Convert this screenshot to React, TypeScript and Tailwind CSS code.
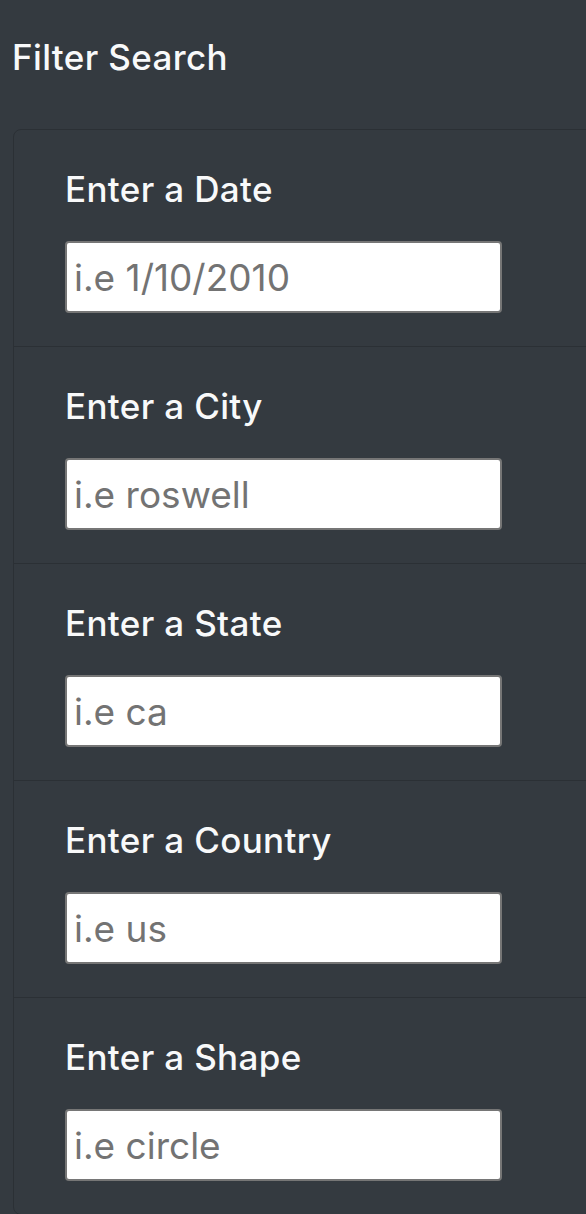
const fields = [
  { label: "Enter a Date", placeholder: "i.e 1/10/2010" },
  { label: "Enter a City", placeholder: "i.e roswell" },
  { label: "Enter a State", placeholder: "i.e ca" },
  { label: "Enter a Country", placeholder: "i.e us" },
  { label: "Enter a Shape", placeholder: "i.e circle" },
];

export default function App() {
  return (
    <div
      className="h-[1214px] w-[586px] overflow-hidden bg-[#343a40] text-[#f8f9fa]"
      style={{ fontFamily: "Inter, 'Liberation Sans', sans-serif" }}
    >
      <h4 className="pl-3 pt-[36px] text-[35px] font-medium leading-[42px] tracking-[0.01em]">Filter Search</h4>
      <div className="ml-[13px] mt-[51px] w-[640px] rounded-[8px] border border-[#2b3035]">
        {fields.map((f, i) => (
          <div
            key={f.label}
            className={
              i === 0
                ? "pl-[51px] pt-[35px] pb-[33px]"
                : "border-t border-[#2b3035] pl-[51px] pt-[35px] pb-[33px]"
            }
          >
            <label className="block text-[35px] font-medium leading-[48px] tracking-[0.01em]">{f.label}</label>
            <input
              type="text"
              placeholder={f.placeholder}
              className="mt-[28px] block h-[72px] w-[437px] rounded-[4px] border-2 border-[#767676] bg-white px-[7px] text-[37px] text-black placeholder:text-[#737373] focus:outline-none"
            />
          </div>
        ))}
      </div>
    </div>
  );
}
